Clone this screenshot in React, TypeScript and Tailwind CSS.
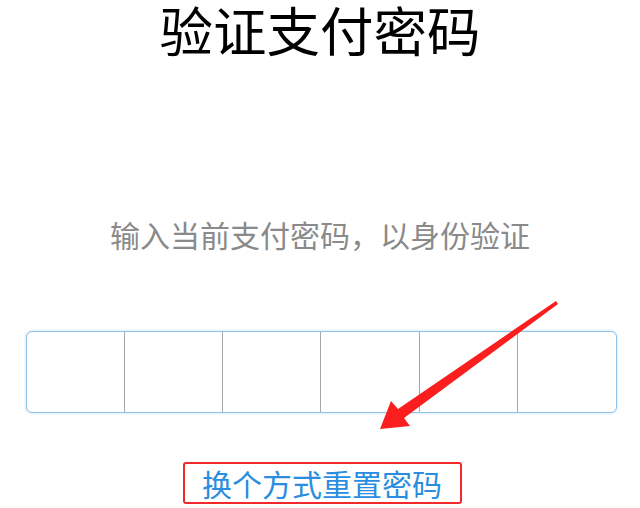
const font = { fontFamily: '"Noto Sans CJK SC", "Noto Sans", sans-serif' };

export default function App() {
  const cells = [0, 1, 2, 3, 4, 5];

  return (
    <div className="relative w-[640px] h-[508px] bg-white overflow-hidden" style={font}>
      <div className="flex flex-col items-center">
        <h1 className="text-[53.5px] leading-[58px] text-black">验证支付密码</h1>
        <p className="mt-[161px] text-[30px] leading-none text-[#8a8a8a]">输入当前支付密码，以身份验证</p>

        <div className="mt-[82px] ml-[2px] flex w-[591px] h-[82px] border-[1.5px] border-[#8fc3ec] rounded-[6px] shadow-[0_0_3px_rgba(143,195,236,0.6)] bg-white">
          {cells.map(i => (
            <div key={i} className={`flex-1 ${i > 0 ? 'border-l border-[#a6a6a6]' : ''}`} />
          ))}
        </div>

        <button className="mt-[49px] ml-[4px] w-[279px] h-[42px] flex items-center justify-center border-2 border-[#f02a2a] rounded-[3px] text-[30px] leading-none text-[#2a8de0]">
          换个方式重置密码
        </button>
      </div>

      <svg className="absolute left-0 top-0 pointer-events-none" width="640" height="508" viewBox="0 0 640 508">
        <polygon
          fill="#fa1e1e"
          points="556,301 558,304 404,418 410,426 380,429 391,401 398,409"
        />
      </svg>
    </div>
  );
}
